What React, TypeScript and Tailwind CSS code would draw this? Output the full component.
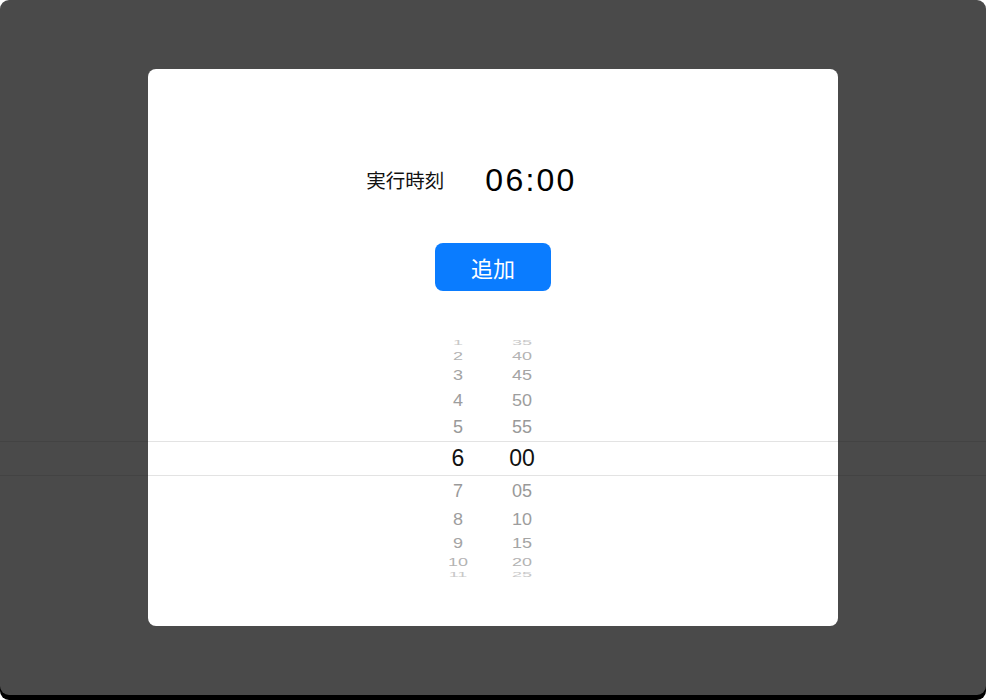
const rows = [
  { h: '1', m: '35', ht: 'h-[10px]', cls: 'scale-y-[0.35] text-[#c8c8c8]' },
  { h: '2', m: '40', ht: 'h-[16px]', cls: 'scale-y-[0.6] text-[#b3b3b3]' },
  { h: '3', m: '45', ht: 'h-[22px]', cls: 'scale-y-[0.8] text-[#a4a4a4]' },
  { h: '4', m: '50', ht: 'h-[27px]', cls: 'scale-y-[0.95] text-[#9d9d9d]' },
  { h: '5', m: '55', ht: 'h-[28px]', cls: 'text-[#999999]' },
  { h: '6', m: '00', ht: 'h-[35px]', cls: '', selected: true },
  { h: '7', m: '05', ht: 'h-[30px]', cls: 'text-[#999999]' },
  { h: '8', m: '10', ht: 'h-[26px]', cls: 'scale-y-[0.95] text-[#9d9d9d]' },
  { h: '9', m: '15', ht: 'h-[22px]', cls: 'scale-y-[0.8] text-[#a4a4a4]' },
  { h: '10', m: '20', ht: 'h-[16px]', cls: 'scale-y-[0.6] text-[#b3b3b3]' },
  { h: '11', m: '25', ht: 'h-[10px]', cls: 'scale-y-[0.35] text-[#c8c8c8]' },
];

function Picker() {
  return (
    <div className="flex flex-col w-full">
      {rows.map((r) =>
        r.selected ? (
          <div key={r.h} className={`${r.ht} flex items-center justify-center pr-[6px] border-y border-[#e3e3e3]`}>
            <span className="block w-16 text-center text-[23px] leading-none text-[#111]">{r.h}</span>
            <span className="block w-16 text-center text-[23px] leading-none text-[#111]">{r.m}</span>
          </div>
        ) : (
          <div key={r.h} className={`${r.ht} flex items-center justify-center pr-[6px]`}>
            <span className={`block w-16 text-center text-[18px] leading-none ${r.cls}`}>{r.h}</span>
            <span className={`block w-16 text-center text-[18px] leading-none ${r.cls}`}>{r.m}</span>
          </div>
        )
      )}
    </div>
  );
}

export default function App() {
  return (
    <div className="w-[986px] h-[700px] bg-white overflow-hidden" style={{ fontFamily: '"Liberation Sans", Arial, sans-serif' }}>
      <div className="relative h-[695px] bg-[#4a4a4a] rounded-[9px] shadow-[0_5px_0_#000]">
        {/* picker lines of the page under the dim layer */}
        <div className="h-[441px]" />
        <div className="h-[35px] border-y border-[#434343]" />

        {/* Dialog */}
        <div className="absolute inset-0 flex items-center justify-center">
          <div className="w-[690px] h-[557px] bg-white rounded-[8px] flex flex-col items-center pt-[91px]">
            <div className="h-10 flex items-center pr-[43px]">
              <span
                className="text-[19.5px] text-[#111]"
                style={{ fontFamily: '"Noto Sans CJK JP", sans-serif' }}
              >
                実行時刻
              </span>
              <span className="ml-[41px] text-[32px] tracking-[0.07em] text-black">06:00</span>
            </div>

            <button
              className="mt-[43px] w-[116px] h-12 rounded-[8px] bg-[#0a7cff] text-white text-[22px]"
              style={{ fontFamily: '"Noto Sans CJK JP", sans-serif' }}
            >
              追加
            </button>

            <div className="mt-[47px] w-full">
              <Picker />
            </div>
          </div>
        </div>
      </div>
    </div>
  );
}
